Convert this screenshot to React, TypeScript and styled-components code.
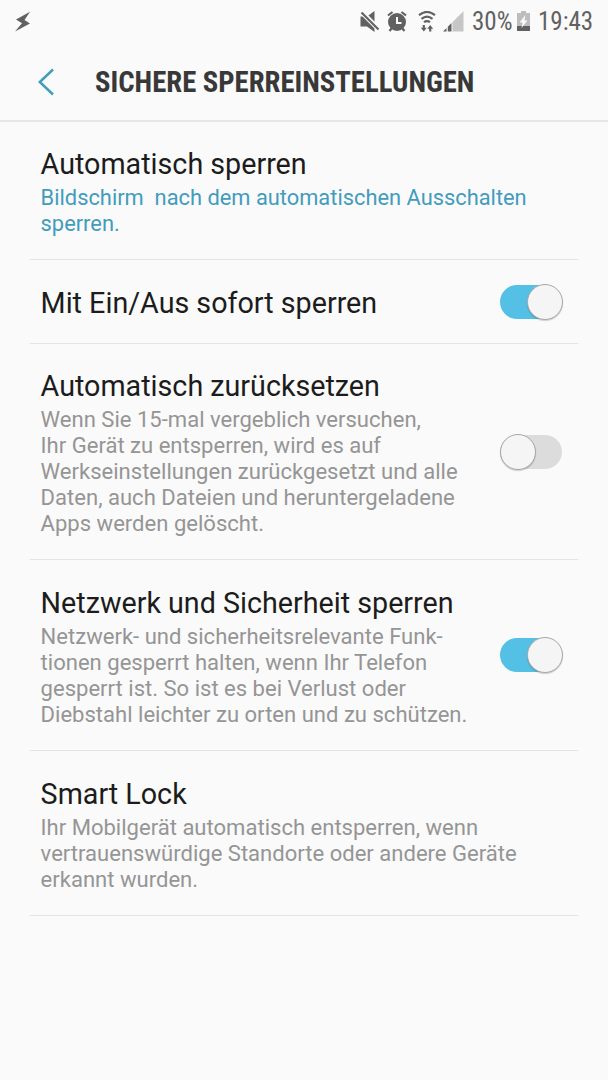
import React from "react";
import styled, { createGlobalStyle } from "styled-components";

const GlobalStyle = createGlobalStyle`
  * { box-sizing: border-box; }
  body { margin: 0; background: #fafafa; font-family: Roboto, "Liberation Sans", sans-serif; }
`;

const Screen = styled.div`
  width: 608px;
  height: 1080px;
  background: #fafafa;
  overflow: hidden;
`;

const StatusBar = styled.div`
  display: flex;
  align-items: center;
  height: 43px;
  padding: 0 14px;
  color: #616161;
`;

const StatusIcon = styled.svg<{ $gap?: number }>`
  display: block;
  flex: none;
  margin-right: ${(p) => p.$gap ?? 0}px;
`;

const Spacer = styled.div`
  flex: 1;
`;

const StatusText = styled.span<{ $width: number }>`
  width: ${(p) => p.$width}px;
  flex: none;
  font-family: "Roboto Condensed", Roboto, sans-serif;
  font-size: 25px;
  font-stretch: 75%;
  line-height: 28px;
  white-space: nowrap;
`;

const Header = styled.header`
  display: flex;
  align-items: center;
  height: 79px;
  padding: 0 0 0 37px;
  border-bottom: 2px solid #e6e6e6;
`;

const BackButton = styled.button`
  width: 58px;
  height: 28px;
  padding: 0;
  border: 0;
  background: none;
`;

const BackIcon = styled.svg`
  display: block;
`;

const Title = styled.h1`
  margin: 1px 0 0;
  font-family: "Roboto Condensed", Roboto, sans-serif;
  font-stretch: 75%;
  font-size: 28.7px;
  line-height: 34px;
  font-weight: 700;
  color: #383838;
  white-space: nowrap;
`;

const List = styled.main`
  padding: 0 30px;
`;

const Row = styled.section<{ $height: number }>`
  display: flex;
  align-items: center;
  justify-content: space-between;
  height: ${(p) => p.$height}px;
  padding: 3px 15px 0 10.6px;
  border-bottom: 1px solid #e3e3e3;
`;

const Label = styled.h2`
  margin: 0;
  font-size: 28.7px;
  line-height: 34px;
  font-weight: 400;
  color: #1c1c1c;
  white-space: nowrap;
`;

const Summary = styled.p<{ $accent?: boolean }>`
  margin: 4px 0 0;
  font-size: ${(p) => (p.$accent ? 21.85 : 22.05)}px;
  line-height: 26px;
  color: ${(p) => (p.$accent ? "#429cbd" : "#959595")};
  white-space: pre;
`;

const Switch = styled.button<{ $on: boolean }>`
  display: flex;
  align-items: center;
  flex: none;
  width: 62px;
  height: 34px;
  margin: -3px 1px 0 0;
  padding: 0;
  border: 0;
  border-radius: 17px;
  background: ${(p) => (p.$on ? "#55c0e5" : "#dcdcdc")};
`;

const Thumb = styled.span<{ $on: boolean }>`
  flex: none;
  width: 36px;
  height: 36px;
  margin-left: ${(p) => (p.$on ? 27 : 0)}px;
  border-radius: 50%;
  border: 1px solid #a8a8a8;
  background: #f5f5f5;
  box-shadow: 0 1px 1px rgba(0, 0, 0, 0.18);
`;

type Item = { label: string; summary?: string[]; accent?: boolean; on?: boolean; height: number };

const items: Item[] = [
  {
    label: "Automatisch sperren",
    summary: ["Bildschirm  nach dem automatischen Ausschalten", "sperren."],
    accent: true,
    height: 138,
  },
  { label: "Mit Ein/Aus sofort sperren", on: true, height: 84 },
  {
    label: "Automatisch zurücksetzen",
    summary: [
      "Wenn Sie 15-mal vergeblich versuchen,",
      "Ihr Gerät zu entsperren, wird es auf",
      "Werkseinstellungen zurückgesetzt und alle",
      "Daten, auch Dateien und heruntergeladene",
      "Apps werden gelöscht.",
    ],
    on: false,
    height: 216,
  },
  {
    label: "Netzwerk und Sicherheit sperren",
    summary: [
      "Netzwerk- und sicherheitsrelevante Funk-",
      "tionen gesperrt halten, wenn Ihr Telefon",
      "gesperrt ist. So ist es bei Verlust oder",
      "Diebstahl leichter zu orten und zu schützen.",
    ],
    on: true,
    height: 191,
  },
  {
    label: "Smart Lock",
    summary: [
      "Ihr Mobilgerät automatisch entsperren, wenn",
      "vertrauenswürdige Standorte oder andere Geräte",
      "erkannt wurden.",
    ],
    height: 165,
  },
];

export default function App() {
  return (
    <Screen>
      <GlobalStyle />
      <StatusBar>
        <StatusIcon width="18" height="22" viewBox="0 0 18 22" fill="#616161">
          <path d="M16 0.800 2 8.500l6 3.700L1 20.500 16 12.500 10.500 9z" />
        </StatusIcon>
        <Spacer />
        <StatusIcon $gap={7} width="20" height="22" viewBox="0 0 20 22" fill="#616161">
          <path d="M0.500 5.500H7l7.500-5.500v21L7 15.500H0.500z" />
          <path d="M0 -0.500 20 19.500" stroke="#fafafa" strokeWidth="5" />
          <path d="M1.500 1.500 18.500 18.500" stroke="#616161" strokeWidth="2.200" />
        </StatusIcon>
        <StatusIcon $gap={11} width="20" height="22" viewBox="0 0 20 22" fill="#616161">
          <circle cx="10" cy="11" r="9" />
          <path d="M1 4.500 5.500 1M19 4.500 14.500 1M4.500 17.500 2.500 20M15.500 17.500 17.500 20" stroke="#616161" strokeWidth="2.200" />
          <path d="M10 6v6h4.500" fill="none" stroke="#fafafa" strokeWidth="2" />
        </StatusIcon>
        <StatusIcon $gap={7} width="18" height="22" viewBox="0 0 18 22" fill="none" stroke="#616161" strokeWidth="2.200">
          <path d="M1 4.200q8-6.500 16 0M3.500 7.900q5.500-4.500 11 0M6 11.200q3-2.300 6 0" />
          <path d="M5.800 14v4M12.200 20.500v-4" />
          <path d="M2.800 16.800h6L5.800 20.500zM9.200 17.700h6L12.200 14z" fill="#616161" stroke="none" />
        </StatusIcon>
        <StatusIcon $gap={8} width="21" height="22" viewBox="0 0 21 22">
          <path d="M9.500 11.200 20.500 0v20.500h-11z" fill="#c6c6c6" />
          <path d="M0 20.500 3.500 17v3.500zM4.800 15.700 8.500 12v8.500H4.800z" fill="#616161" />
        </StatusIcon>
        <StatusText $width={45}>30%</StatusText>
        <StatusIcon $gap={8} width="13" height="21" viewBox="0 0 13 21">
          <path d="M0 2h4V0h5v2h4v13H0z" fill="#bdbdbd" />
          <path d="M0 15h13v5H0z" fill="#616161" />
          <path d="M8.500 4 2.500 11.500h3L4.500 17l6-7.500h-3z" fill="#fafafa" />
        </StatusIcon>
        <StatusText $width={56}>19:43</StatusText>
      </StatusBar>
      <Header>
        <BackButton aria-label="Zurück">
          <BackIcon width="20" height="28" viewBox="0 0 20 28">
            <path d="M16 1.500 2.800 14 16 26.500" fill="none" stroke="#429cbd" strokeWidth="2.500" />
          </BackIcon>
        </BackButton>
        <Title>SICHERE SPERREINSTELLUNGEN</Title>
      </Header>
      <List>
        {items.map((item) => (
          <Row key={item.label} $height={item.height}>
            <div>
              <Label>{item.label}</Label>
              {item.summary && <Summary $accent={item.accent}>{item.summary.join("\n")}</Summary>}
            </div>
            {item.on !== undefined && (
              <Switch $on={item.on} role="switch" aria-checked={item.on} aria-label={item.label}>
                <Thumb $on={item.on} />
              </Switch>
            )}
          </Row>
        ))}
      </List>
    </Screen>
  );
}
